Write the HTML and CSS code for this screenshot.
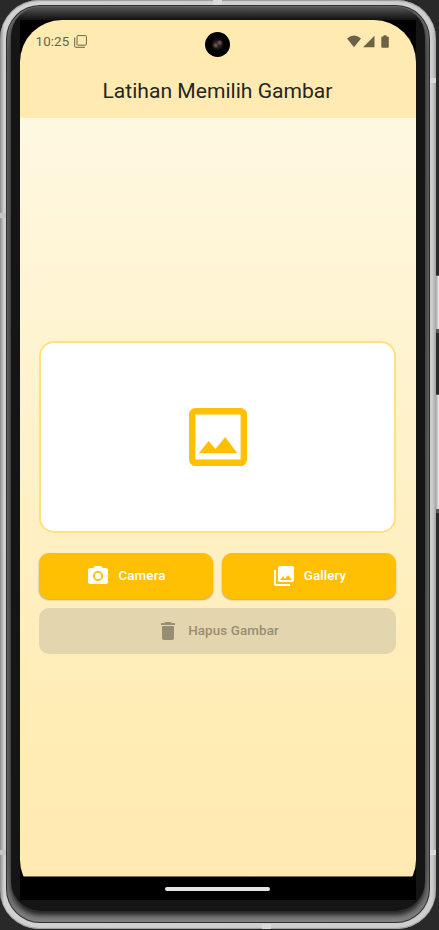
FILE: index.html
```html
<!DOCTYPE html>
<html lang="id">
<head>
<meta charset="utf-8">
<title>Latihan Memilih Gambar</title>
<link rel="stylesheet" href="styles.css">
</head>
<body>
<div class="shell">
  <i class="antenna a-top"></i><i class="antenna a-bottom"></i>
  <i class="antenna a-left1"></i><i class="antenna a-left2"></i><i class="antenna a-right1"></i><i class="antenna a-right2"></i>
  <i class="key power"></i><i class="key volume"></i>
  <div class="rim"><div class="bezel"><div class="glass"><div class="screen">
    <span class="lens"></span>
    <header class="appbar">
      <div class="status">
        <span class="clock">10:25</span>
        <svg class="note" width="13" height="13" viewBox="0 0 13 13" fill="none" stroke="currentColor"><rect x="3" y=".6" width="9.4" height="9.6" rx="1"/><path d="M.7 2.5v8.8q0 1 1 1h9.2"/></svg>
        <svg class="signals" width="43" height="14" viewBox="0 0 43 14" fill="currentColor"><path d="M0 3.4Q7-2.2 14 3.4L7 12.3z"/><path d="M27.5.8v11.4H16z"/><path d="M36.5.3h3v1.3h1.3q1 0 1 1v9.1q0 1-1 1h-5.5q-1 0-1-1V2.6q0-1 1-1h1.2z"/></svg>
      </div>
      <h1>Latihan Memilih Gambar</h1>
    </header>
    <main>
      <div class="preview">
        <svg width="58" height="58" viewBox="0 0 58 58" fill="#ffc003"><path fill-rule="evenodd" d="M6.4 0h45.2A6.4 6.4 0 0 1 58 6.4v45.2a6.4 6.4 0 0 1-6.4 6.4H6.4A6.4 6.4 0 0 1 0 51.6V6.4A6.4 6.4 0 0 1 6.4 0zm0 6.4v45.2h45.2V6.4z"/><path d="M9.7 45.2l9.9-12.3 6.8 8L36.2 29l12.1 16.2z"/></svg>
      </div>
      <div class="actions">
        <button class="btn"><svg viewBox="0 0 24 24"><circle cx="12" cy="12" r="3.2"/><path d="M9 2L7.17 4H4c-1.1 0-2 .9-2 2v12c0 1.1.9 2 2 2h16c1.1 0 2-.9 2-2V6c0-1.1-.9-2-2-2h-3.17L15 2H9zm3 15c-2.76 0-5-2.24-5-5s2.24-5 5-5 5 2.24 5 5-2.24 5-5 5z"/></svg>Camera</button>
        <button class="btn"><svg viewBox="0 0 24 24"><path d="M22 16V4c0-1.1-.9-2-2-2H8c-1.1 0-2 .9-2 2v12c0 1.1.9 2 2 2h12c1.1 0 2-.9 2-2zm-11-4l2.03 2.71L16 11l4 5H8l3-4zM2 6v14c0 1.1.9 2 2 2h14v-2H4V6H2z"/></svg>Gallery</button>
      </div>
      <button class="btn disabled" disabled><svg viewBox="0 0 24 24"><path d="M6 19c0 1.1.9 2 2 2h8c1.1 0 2-.9 2-2V7H6v12zM19 4h-3.5l-1-1h-5l-1 1H5v2h14V4z"/></svg>Hapus Gambar</button>
    </main>
    <footer class="navbar"><span></span></footer>
  </div></div></div></div>
</div>
</body>
</html>
```
FILE: styles.css
```css
* { box-sizing: border-box; }
body {
  margin: 0;
  width: 439px;
  height: 930px;
  overflow: hidden;
  background: #292929;
  font-family: Roboto, sans-serif;
}
/* Phone body: polished edge, dark line, grey bevel, black glass */
.shell {
  position: relative;
  width: 436px;
  height: 929px;
  padding: 5px 6px 6px;
  border-radius: 39px;
  background: linear-gradient(90deg, #8c8c8c, #d2d2d2 4px, #cecece 432px, #a8a8a8);
  box-shadow: inset 0 -1px 1px #999, inset 0 1px 1px #999;
}
.rim {
  height: 918px;
  padding: 1px;
  border-radius: 34px;
  background: #303030;
}
.bezel {
  height: 916px;
  padding: 1px 4px 0;
  border-radius: 33px;
  background: linear-gradient(180deg, #707070, #5c5c5c 50px, #666 860px, #808080);
}
.glass {
  height: 904px;
  padding: 13px 9px 11px;
  border-radius: 29px;
  background: linear-gradient(#000, #000) center 13px / 396px 880px no-repeat, linear-gradient(#555, #151515 12px, #151515);
  box-shadow: 0 0 1px #333, 0 4px 5px #222;
}
.screen {
  position: relative;
  display: flex;
  flex-direction: column;
  width: 396px;
  height: 880px;
  overflow: hidden;
  border-radius: 42px 42px 40px 40px;
  background: #000;
}
.lens {
  position: absolute;
  left: 185px;
  top: 12px;
  width: 25px;
  height: 25px;
  border-radius: 50%;
  background: radial-gradient(circle at 59% 43%, #72465f 0 1px, transparent 3px), radial-gradient(circle at 43% 53%, #69543b 0 1px, transparent 3px), radial-gradient(circle, #29232b 0 3px, #101010 5px, #000 7px);
}
.appbar {
  height: 98px;
  background: #ffeab2;
}
.status {
  display: flex;
  align-items: center;
  height: 43px;
  padding: 0 26px 0 15.5px;
  color: #6c6248;
}
.clock { width: 38px; font-size: 13.4px; letter-spacing: .1px; }
.signals { margin-left: auto; }
h1 {
  margin: 14px 0 0;
  padding-right: 1px;
  color: #262522;
  font-size: 21.1px;
  font-weight: 400;
  line-height: 27px;
  text-align: center;
  white-space: nowrap;
}
main {
  display: flex;
  flex-direction: column;
  justify-content: center;
  gap: 9px;
  height: 758px;
  padding: 0 20px 0 19px;
  background: linear-gradient(#fff8e1, #ffecb3 84%, #ffeab2);
}
.preview {
  display: flex;
  align-items: center;
  justify-content: center;
  height: 192px;
  margin-bottom: 11px;
  border: 2px solid #ffe083;
  border-radius: 15px;
  background: #fff;
}
.actions { display: grid; grid-template-columns: 1fr 1fr; gap: 9px; }
.btn {
  display: flex;
  align-items: center;
  justify-content: center;
  gap: 8px;
  height: 46px;
  padding: 0;
  border: 0;
  border-radius: 10px;
  background: #ffc003;
  box-shadow: 0 1px 2px #0005;
  color: #fff;
  font: 500 13.4px Roboto, sans-serif;
  letter-spacing: .1px;
}
.btn svg { width: 24px; height: 24px; fill: currentColor; }
.disabled { background: #e3d5ae; box-shadow: none; color: #978d74; }
.navbar {
  display: flex;
  align-items: center;
  justify-content: center;
  height: 24px;
  padding-right: 1px;
  border-top: 1px solid #78704f;
}
.navbar span { width: 105px; height: 4px; border-radius: 2px; background: #e6e6e6; }
.antenna { position: absolute; background: #dadada; }
.a-top { left: 213px; top: 0; width: 9px; height: 5px; }
.a-bottom { left: 262px; bottom: 0; width: 9px; height: 5px; }
.a-left1 { left: 0; top: 213px; width: 6px; height: 5px; background: #c4c4c4; }
.a-left2 { left: 0; top: 850px; width: 6px; height: 5px; background: #c4c4c4; }
.a-right1 { right: 0; top: 78px; width: 6px; height: 5px; }
.a-right2 { right: 0; top: 850px; width: 6px; height: 5px; }
.key {
  position: absolute;
  left: 436px;
  width: 3px;
  border: solid #555;
  border-width: 1px 0 4px;
  background: linear-gradient(90deg, #aaa, #eee);
}
.power { top: 275px; height: 58px; }
.volume { top: 394px; height: 119px; }
```
